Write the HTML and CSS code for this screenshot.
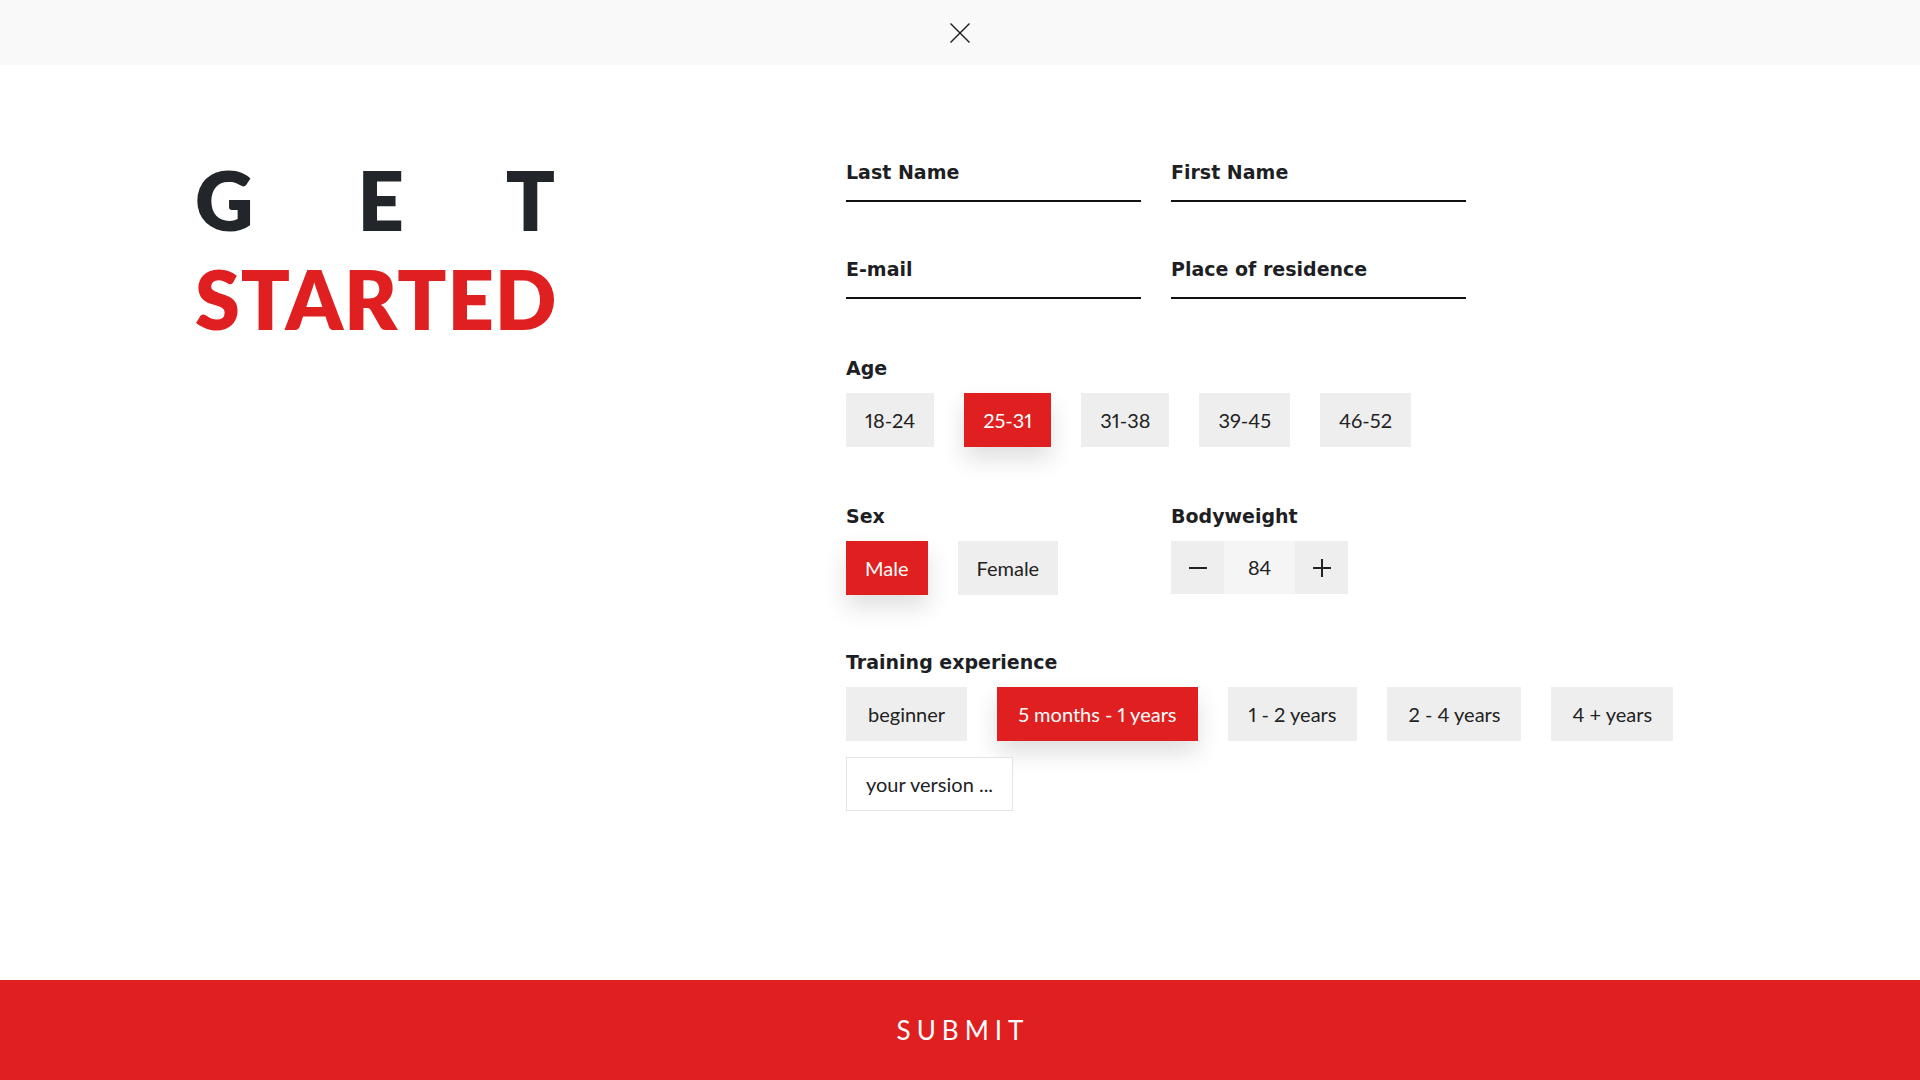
FILE: index.html
```html
<!DOCTYPE html>
<html lang="en">
<head>
<meta charset="utf-8">
<title>Get Started</title>
<link rel="stylesheet" href="styles.css">
</head>
<body>
<div class="page">
  <header class="topbar">
    <button class="close" type="button" aria-label="Close">
      <svg width="20" height="20" viewBox="0 0 20 20"><path d="M0.5 0.5 L19.5 19.5 M19.5 0.5 L0.5 19.5" stroke="#1c1c1c" stroke-width="1.4" fill="none"/></svg>
    </button>
  </header>
  <main class="content">
    <h1 class="title">
      <span class="get">G E T</span>
      <span class="started">STARTED</span>
    </h1>
    <form class="form">
      <div class="fields">
        <div class="field">Last Name</div>
        <div class="field">First Name</div>
        <div class="field">E-mail</div>
        <div class="field">Place of residence</div>
      </div>
      <div class="section">
        <div class="label">Age</div>
        <div class="options">
          <span class="opt">18-24</span>
          <span class="opt active">25-31</span>
          <span class="opt">31-38</span>
          <span class="opt">39-45</span>
          <span class="opt">46-52</span>
        </div>
      </div>
      <div class="section duo">
        <div class="col">
          <div class="label">Sex</div>
          <div class="options">
            <span class="opt active">Male</span>
            <span class="opt">Female</span>
          </div>
        </div>
        <div class="col">
          <div class="label">Bodyweight</div>
          <div class="stepper">
            <span class="step"><svg width="18" height="18" viewBox="0 0 18 18"><path d="M0 9 H18" stroke="#222" stroke-width="2"/></svg></span>
            <span class="value">84</span>
            <span class="step"><svg width="18" height="18" viewBox="0 0 18 18"><path d="M0 9 H18 M9 0 V18" stroke="#222" stroke-width="2"/></svg></span>
          </div>
        </div>
      </div>
      <div class="section training">
        <div class="label">Training experience</div>
        <div class="options wrap">
          <span class="opt wide">beginner</span>
          <span class="opt active">5 months - 1 years</span>
          <span class="opt">1 - 2 years</span>
          <span class="opt">2 - 4 years</span>
          <span class="opt">4 + years</span>
          <span class="opt custom">your version ...</span>
        </div>
      </div>
    </form>
  </main>
  <footer class="submit">SUBMIT</footer>
</div>
</body>
</html>
```
FILE: styles.css
```css
* { box-sizing: border-box; }
html, body { margin: 0; padding: 0; }
body {
  font-family: "Lato", "Liberation Sans", sans-serif;
  color: #222;
  background: #fff;
}
.page {
  display: flex;
  flex-direction: column;
  height: 100vh;
}
.topbar {
  height: 65px;
  flex: 0 0 65px;
  background: #f9f9f9;
  display: flex;
  justify-content: center;
  align-items: center;
}
.close {
  border: 0;
  background: none;
  padding: 0;
  width: 20px;
  height: 20px;
  display: block;
  cursor: pointer;
}
.close svg { display: block; }
.content {
  flex: 1;
  display: grid;
  grid-template-columns: 651px 900px;
  align-items: start;
  padding-left: 195px;
}
.title {
  margin: 85px 0 0;
  width: 360px;
  font-family: "Lato", sans-serif;
  font-weight: 800;
  font-size: 81px;
  line-height: 99px;
}
.get {
  display: block;
  color: #22252a;
  text-align: justify;
  text-align-last: justify;
}
.started {
  display: block;
  color: #e01f20;
  letter-spacing: 1px;
}
.form {
  margin-top: 95px;
}
.fields {
  display: grid;
  grid-template-columns: 295px 295px;
  column-gap: 30px;
  row-gap: 55px;
}
.field, .label {
  font-family: "DejaVu Sans", sans-serif;
  font-weight: 700;
  font-size: 19px;
  line-height: 24px;
  color: #1e1f24;
}
.field {
  padding-bottom: 16px;
  border-bottom: 2px solid #111;
}
.section { margin-top: 57px; }
.section.training { margin-top: 55px; }
.label { margin-bottom: 13px; }
.options {
  display: flex;
  gap: 30px;
}
.options.wrap {
  flex-wrap: wrap;
  row-gap: 16px;
  column-gap: 30px;
}
.opt {
  height: 54px;
  line-height: 54px;
  padding: 0 19px;
  background: #eeeeee;
  font-size: 20px;
  font-variant-numeric: proportional-nums;
  color: #222;
  white-space: nowrap;
}
.options.wrap .opt { padding: 0 21px; }
.options.wrap .opt.wide { padding: 0 22px; }
.opt.active {
  background: #e01f20;
  color: #fff;
  box-shadow: 0 12px 24px rgba(0, 0, 0, 0.13);
}
.options.wrap .opt.custom {
  background: #fff;
  border: 1px solid #e4e4e4;
  line-height: 52px;
  padding: 0 19px;
}
.duo {
  display: grid;
  grid-template-columns: 295px 295px;
  column-gap: 30px;
}
.stepper {
  display: flex;
  height: 53px;
}
.step {
  width: 53px;
  height: 53px;
  background: #eeeeee;
  display: flex;
  align-items: center;
  justify-content: center;
}
.step svg { display: block; }
.value {
  width: 71px;
  background: #f5f5f5;
  text-align: center;
  line-height: 53px;
  font-size: 20px;
  color: #222;
}
.submit {
  flex: 0 0 100px;
  height: 100px;
  background: #e01f20;
  color: #fff;
  text-align: center;
  font-size: 26px;
  line-height: 100px;
  letter-spacing: 6px;
  padding-left: 6px;
}
```
